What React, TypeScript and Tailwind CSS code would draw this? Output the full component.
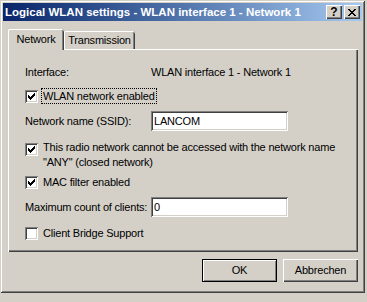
import React from "react";

const btnRaised =
  "shadow-[inset_1px_1px_0_#ffffff,inset_-1px_-1px_0_#404040,inset_-2px_-2px_0_#808080]";

function Check() {
  const cols: [number, number][] = [
    [0, 2],
    [1, 3],
    [2, 4],
    [3, 3],
    [4, 2],
    [5, 1],
    [6, 0],
  ];
  return (
    <svg width="7" height="7" viewBox="0 0 7 7" shapeRendering="crispEdges">
      {cols.map(([x, y]) => (
        <rect key={x} x={x} y={y} width="1" height="3" fill="#000" />
      ))}
    </svg>
  );
}

function CheckBox({ checked }: { checked: boolean }) {
  return (
    <div className="w-[13px] h-[13px] shrink-0 bg-white flex items-center justify-center shadow-[inset_1px_1px_0_#808080,inset_-1px_-1px_0_#ffffff,inset_2px_2px_0_#404040,inset_-2px_-2px_0_#d4d0c8]">
      {checked ? <Check /> : null}
    </div>
  );
}

function CloseGlyph() {
  const rows = [
    "XX....XX",
    ".XX..XX.",
    "..XXXX..",
    "...XX...",
    "..XXXX..",
    ".XX..XX.",
    "XX....XX",
  ];
  return (
    <svg width="8" height="7" viewBox="0 0 8 7" shapeRendering="crispEdges">
      {rows.flatMap((r, y) =>
        r.split("").map((c, x) =>
          c === "X" ? <rect key={`${x}-${y}`} x={x} y={y} width="1" height="1" fill="#000" /> : null
        )
      )}
    </svg>
  );
}

function Field({ value }: { value: string }) {
  return (
    <div className="w-[137px] h-[20px] bg-white flex items-center pl-[3px] leading-[16px] shadow-[inset_1px_1px_0_#808080,inset_-1px_-1px_0_#ffffff,inset_2px_2px_0_#404040,inset_-2px_-2px_0_#d4d0c8]">
      {value}
    </div>
  );
}

export default function App() {
  return (
    <div className="w-[367px] h-[302px] bg-[#d4d0c8] font-['Liberation_Sans',Arial,sans-serif] text-[11px] tracking-[-0.2px] text-black overflow-hidden">
      <div className="w-[365px] h-[293px] p-[3px] flex flex-col bg-[#d4d0c8] shadow-[inset_1px_1px_0_#d4d0c8,inset_-1px_-1px_0_#404040,inset_2px_2px_0_#ffffff,inset_-2px_-2px_0_#808080]">
        {/* Title bar */}
        <div className="h-[18px] shrink-0 flex items-center bg-gradient-to-r from-[#0a246a] to-[#a6caf0] pl-[2px] pr-[2px]">
          <span className="flex-1 text-white font-bold text-[11.5px] tracking-normal leading-[18px] whitespace-nowrap">
            Logical WLAN settings - WLAN interface 1 - Network 1
          </span>
          <div className="flex gap-[2px]">
            <div className={`w-[16px] h-[14px] bg-[#d4d0c8] flex items-center justify-center font-bold text-[12px] leading-[12px] tracking-normal ${btnRaised}`}>
              ?
            </div>
            <div className={`w-[16px] h-[14px] bg-[#d4d0c8] flex items-center justify-center ${btnRaised}`}>
              <CloseGlyph />
            </div>
          </div>
        </div>

        {/* Tabs */}
        <div className="mt-[8px] ml-[5px] h-[20px] flex items-start">
          <div className="relative z-10 w-[56px] h-[21px] bg-[#d4d0c8] rounded-t-[2px] flex items-center justify-center pb-[1px] shadow-[inset_1px_0_0_#ffffff,inset_0_1px_0_#ffffff,inset_-1px_0_0_#404040,inset_-2px_0_0_#808080]">
            Network
          </div>
          <div className="mt-[2px] w-[71px] h-[18px] bg-[#d4d0c8] rounded-t-[2px] flex items-center justify-center pt-[1px] shadow-[inset_1px_0_0_#ffffff,inset_0_1px_0_#ffffff,inset_-1px_0_0_#404040,inset_-2px_0_0_#808080]">
            Transmission
          </div>
        </div>

        {/* Panel */}
        <div className="ml-[5px] w-[350px] h-[203px] shrink-0 pl-[17px] pt-[15px] flex flex-col shadow-[inset_1px_1px_0_#ffffff,inset_-1px_-1px_0_#404040,inset_-2px_-2px_0_#808080]">
          <div className="h-[16px] flex items-center">
            <span className="w-[126px]">Interface:</span>
            <span>WLAN interface 1 - Network 1</span>
          </div>

          <div className="mt-[8px] h-[16px] flex items-center">
            <CheckBox checked />
            <span className="ml-[3px] px-[1px] border border-dotted border-black leading-[14px]">
              WLAN network enabled
            </span>
          </div>

          <div className="mt-[7px] h-[20px] flex items-center">
            <span className="w-[126px]">Network name (SSID):</span>
            <Field value="LANCOM" />
          </div>

          <div className="mt-[8px] flex items-start">
            <div className="mt-[4px]">
              <CheckBox checked />
            </div>
            <span className="ml-[3px] px-[1px] border border-transparent leading-[15px]">
              This radio network cannot be accessed with the network name
              <br />
              "ANY" (closed network)
            </span>
          </div>

          <div className="mt-[3px] h-[16px] flex items-center">
            <CheckBox checked />
            <span className="ml-[3px] px-[1px] border border-transparent leading-[14px]">
              MAC filter enabled
            </span>
          </div>

          <div className="mt-[7px] h-[20px] flex items-center">
            <span className="w-[126px]">Maximum count of clients:</span>
            <Field value="0" />
          </div>

          <div className="mt-[8px] h-[16px] flex items-center">
            <CheckBox checked={false} />
            <span className="ml-[3px] px-[1px] border border-transparent leading-[14px]">
              Client Bridge Support
            </span>
          </div>
        </div>

        {/* Buttons */}
        <div className="mt-[7px] ml-[5px] w-[350px] flex justify-end gap-[6px]">
          <div className="w-[75px] h-[23px] border border-black bg-[#d4d0c8] flex items-center justify-center shadow-[inset_1px_1px_0_#ffffff,inset_-1px_-1px_0_#808080]">
            OK
          </div>
          <div className={`w-[75px] h-[23px] bg-[#d4d0c8] flex items-center justify-center ${btnRaised}`}>
            Abbrechen
          </div>
        </div>
      </div>
    </div>
  );
}
